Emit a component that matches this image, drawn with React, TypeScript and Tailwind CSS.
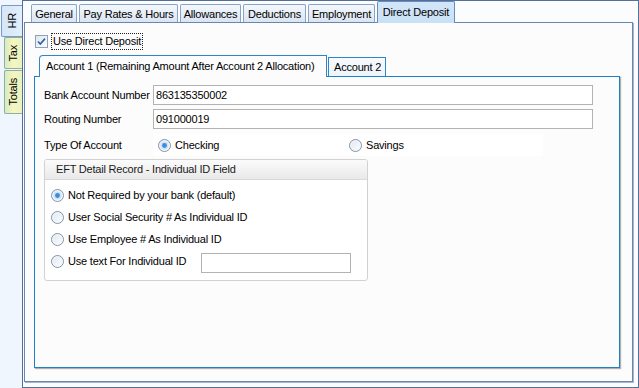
import React from "react";

function Radio({ checked = false }: { checked?: boolean }) {
  return (
    <svg width="13" height="13" viewBox="0 0 13 13" className="shrink-0">
      <defs>
        <linearGradient id={checked ? "rg1" : "rg0"} x1="0" y1="0" x2="1" y2="1">
          <stop offset="0" stopColor="#dfe6ee" />
          <stop offset="1" stopColor="#ffffff" />
        </linearGradient>
      </defs>
      <circle cx="6.5" cy="6.5" r="6" fill={`url(#${checked ? "rg1" : "rg0"})`} stroke="#8193aa" strokeWidth="1" />
      <circle cx="6.5" cy="6.5" r="4.6" fill="none" stroke="#f2f5f9" strokeWidth="1" />
      {checked && (
        <>
          <circle cx="6.5" cy="6.5" r="4" fill="#cfe2f6" />
          <circle cx="6.5" cy="6.5" r="2.4" fill="#3a8ee0" />
        </>
      )}
    </svg>
  );
}

function Checkbox() {
  return (
    <svg width="13" height="13" viewBox="0 0 13 13" className="shrink-0">
      <defs>
        <linearGradient id="cbg" x1="0" y1="0" x2="1" y2="1">
          <stop offset="0" stopColor="#dde5ee" />
          <stop offset="1" stopColor="#ffffff" />
        </linearGradient>
      </defs>
      <rect x="0.5" y="0.5" width="12" height="12" fill="url(#cbg)" stroke="#8ea2bd" />
      <path d="M3 6.5 L5.3 9 L10 3.6" fill="none" stroke="#2b64ad" strokeWidth="1.6" />
    </svg>
  );
}

function TopTab({ label, w, selected = false }: { label: string; w: number; selected?: boolean }) {
  if (selected) {
    return (
      <div
        className="relative z-10 -mb-px h-[22px] flex items-center justify-center border border-b-0 border-[#6a8cb8] bg-gradient-to-b from-[#d3e6f9] to-[#c9e0f6] rounded-t-[2px]"
        style={{ width: w }}
      >
        <span className="pb-[1px]">{label}</span>
      </div>
    );
  }
  return (
    <div
      className="h-[18px] flex items-center justify-center border border-b-0 border-[#8aa3c4] bg-gradient-to-b from-[#f4f8fc] to-[#dae5f2] rounded-t-[2px]"
      style={{ width: w }}
    >
      <span className="pt-[1px]">{label}</span>
    </div>
  );
}

export default function App() {
  return (
    <div className="w-[639px] h-[388px] flex bg-[#f0f6fd] text-[11px] leading-none text-black tracking-[-0.2px] font-['Liberation_Sans',Arial,sans-serif] overflow-hidden">
      {/* left vertical tabs */}
      <div className="w-[22px] shrink-0 flex flex-col items-end pt-[5px]">
        <div className="w-[21px] h-[32px] border border-r-0 border-[#7b9bc2] bg-gradient-to-r from-[#d4e6f8] to-[#e2eefb] flex items-center justify-center rounded-l-[2px]">
          <span className="[writing-mode:vertical-rl] rotate-180">HR</span>
        </div>
        <div className="mt-[0px] w-[18px] h-[32px] border border-r-0 border-[#8fae9c] bg-gradient-to-r from-[#d5ecc7] via-[#f6f6bd] to-[#e9f3c2] flex items-center justify-center rounded-l-[2px]">
          <span className="[writing-mode:vertical-rl] rotate-180">Tax</span>
        </div>
        <div className="mt-[1px] w-[18px] h-[44px] border border-r-0 border-[#8fae9c] bg-gradient-to-r from-[#d5ecc7] via-[#f6f6bd] to-[#e9f3c2] flex items-center justify-center rounded-l-[2px]">
          <span className="[writing-mode:vertical-rl] rotate-180">Totals</span>
        </div>
      </div>

      {/* outer frame */}
      <div className="w-[617px] h-[388px] border border-[#52709a] bg-[#fbfcfd] flex flex-col">
        {/* top tabs */}
        <div className="h-[21px] pl-[8px] flex items-end gap-[2px]">
          <TopTab label="General" w={46} />
          <TopTab label="Pay Rates & Hours" w={99} />
          <TopTab label="Allowances" w={61} />
          <TopTab label="Deductions" w={63} />
          <TopTab label="Employment" w={67} />
          <TopTab label="Direct Deposit" w={78} selected />
        </div>

        {/* tab page */}
        <div className="ml-[1px] w-[609px] h-[360px] border border-[#6887ae] bg-[#fcfcfc] shadow-[1px_1px_0_#aab6c6] flex flex-col">
          <div className="pt-[10px] pl-[10px] flex items-center h-[27px]">
            <Checkbox />
            <div className="ml-[3px] h-[17px] px-[1px] flex items-center border border-dotted border-[#222]">
              <span>Use Direct Deposit</span>
            </div>
          </div>

          {/* inner tabs */}
          <div className="ml-[9px] mt-[5px] flex flex-col">
            <div className="pl-[5px] flex items-end h-[21px]">
              <div className="relative z-10 -mb-px w-[288px] h-[22px] border border-b-0 border-[#2f86c6] rounded-tl-[4px] bg-[#fcfcfc] flex items-center pl-[6px]">
                <span>Account 1 (Remaining Amount After Account 2 Allocation)</span>
              </div>
              <div className="ml-[1px] w-[58px] h-[19px] border border-b-0 border-[#2f86c6] bg-gradient-to-b from-[#f7fafd] to-[#edf4fb] flex items-center pl-[5px]">
                <span className="pt-[1px]">Account 2</span>
              </div>
            </div>

            <div className="w-[586px] h-[292px] border border-[#1c82c4] bg-[#fcfcfc] shadow-[1px_1px_1px_rgba(0,0,0,0.3)] pl-[9px] pt-[8px] flex flex-col">
              <div className="flex items-center h-[20px]">
                <span className="w-[109px] shrink-0">Bank Account Number</span>
                <div className="w-[440px] h-[20px] border border-[#b3b3b3] bg-white flex items-center pl-[2px]">
                  863135350002
                </div>
              </div>
              <div className="mt-[4px] flex items-center h-[20px]">
                <span className="w-[109px] shrink-0">Routing Number</span>
                <div className="w-[440px] h-[20px] border border-[#b3b3b3] bg-white flex items-center pl-[2px]">
                  091000019
                </div>
              </div>

              <div className="mt-[5px] flex items-center h-[22px]">
                <span className="w-[109px] shrink-0">Type Of Account</span>
                <div className="w-[390px] h-[22px] bg-white flex items-center pl-[5px]">
                  <div className="w-[191px] flex items-center gap-[4px]">
                    <Radio checked />
                    <span>Checking</span>
                  </div>
                  <div className="flex items-center gap-[4px]">
                    <Radio />
                    <span>Savings</span>
                  </div>
                </div>
              </div>

              <div className="mt-[3px] w-[324px] h-[122px] border border-[#d2d2d2] rounded-[3px] bg-white flex flex-col overflow-hidden">
                <div className="h-[20px] shrink-0 border-b border-[#d9d9d9] bg-gradient-to-b from-[#fbfbfb] to-[#e9e9e9] flex items-center pl-[11px]">
                  <span className="text-[#1a1a1a]">EFT Detail Record - Individual ID Field</span>
                </div>
                <div className="pt-[4px] pl-[6px] flex flex-col">
                  <div className="h-[22px] flex items-center gap-[4px]">
                    <Radio checked />
                    <span>Not Required by your bank (default)</span>
                  </div>
                  <div className="h-[22px] flex items-center gap-[4px]">
                    <Radio />
                    <span>User Social Security # As Individual ID</span>
                  </div>
                  <div className="h-[22px] flex items-center gap-[4px]">
                    <Radio />
                    <span>Use Employee # As Individual ID</span>
                  </div>
                  <div className="h-[22px] flex items-center">
                    <div className="w-[150px] flex items-center gap-[4px]">
                      <Radio />
                      <span>Use text For Individual ID</span>
                    </div>
                    <div className="mt-[3px] w-[150px] h-[20px] border border-[#b3b3b3] bg-white" />
                  </div>
                </div>
              </div>
            </div>
          </div>
        </div>
      </div>
    </div>
  );
}
